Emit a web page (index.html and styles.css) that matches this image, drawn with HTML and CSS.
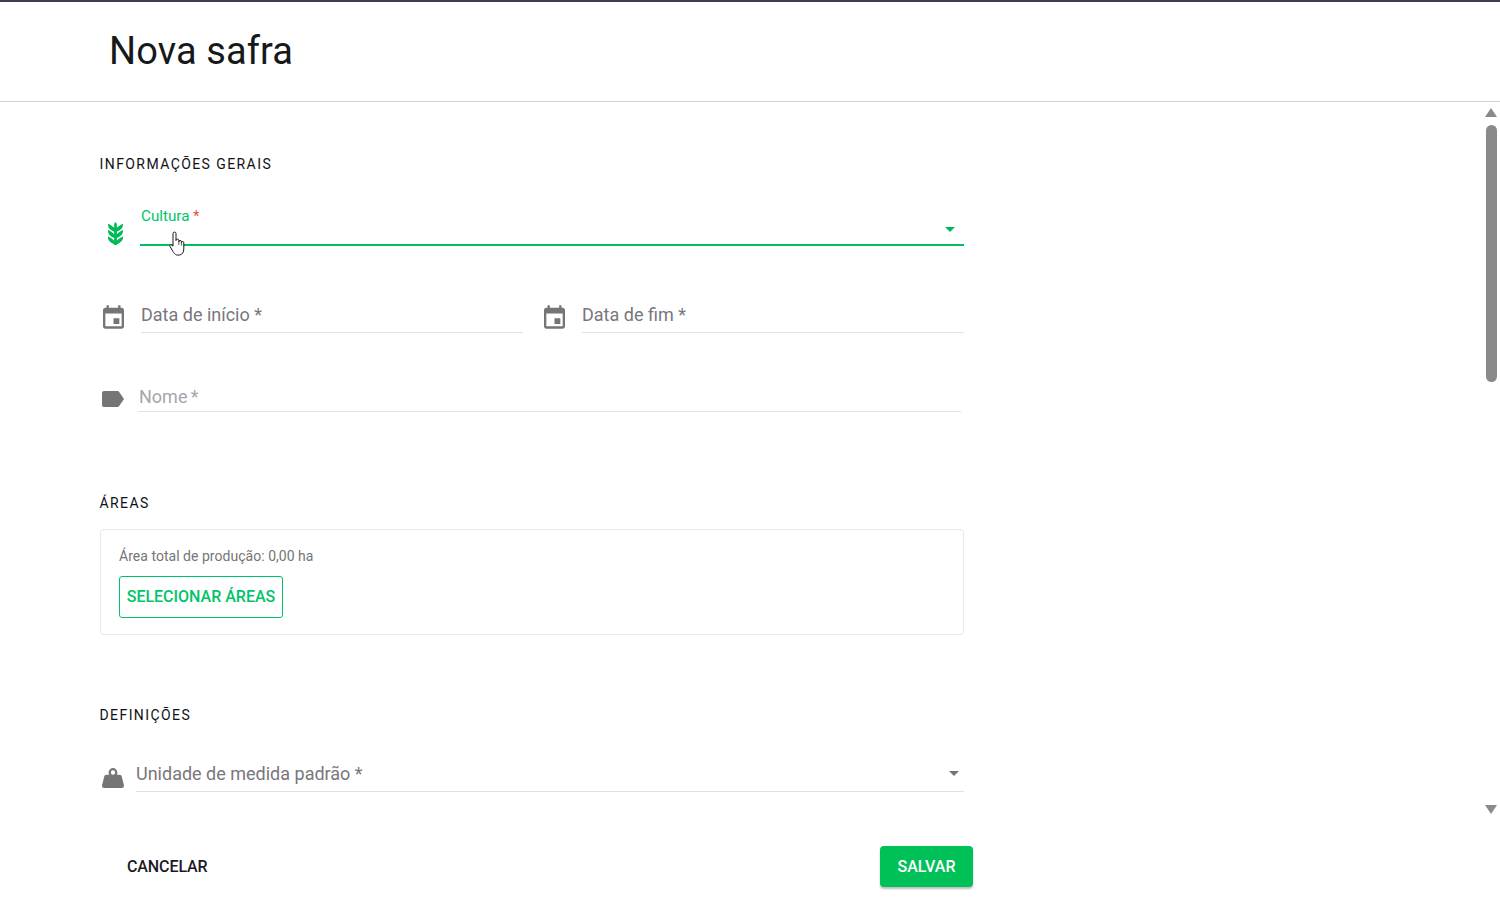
FILE: index.html
```html
<!DOCTYPE html>
<html lang="pt-BR">
<head>
<meta charset="utf-8">
<title>Nova safra</title>
<link rel="stylesheet" href="styles.css">
</head>
<body>
<div class="page">
  <header class="header"><h1 class="title">Nova safra</h1></header>
  <main class="main">
    <div class="content">
      <form class="form">
        <h2 class="section-title first">INFORMAÇÕES GERAIS</h2>
        <div class="row row-cultura">
          <svg class="icon icon-barley" viewBox="6.5 2 11 20" preserveAspectRatio="none"><path d="M7.33 18.33C6.5 17.17 6.5 15.83 6.5 14.5c1.67 1 3.33 2 4.17 3.17l.33.56v-2.28c-1.5-.9-2.86-1.95-3.67-3.12C6.5 11.67 6.5 10.33 6.5 9c1.67 1 3.33 2 4.17 3.17l.33.56V10.5C9.5 9.65 8.14 8.5 7.33 7.33 6.5 6.17 6.5 4.83 6.5 3.5c1.67 1 3.33 2 4.17 3.17.12.17.23.33.33.52V4.5S11 3 12 2c1 1 1 2.5 1 2.5v2.69c.1-.19.21-.35.33-.52C14.17 5.5 15.83 4.5 17.5 3.5c0 1.33 0 2.67-.83 3.83-.81 1.17-2.17 2.32-3.67 3.17v2.23l.33-.56C14.17 11 15.83 10 17.5 9c0 1.33 0 2.67-.83 3.83-.81 1.17-2.17 2.22-3.67 3.12v2.28l.33-.56c.84-1.17 2.5-2.17 4.17-3.17 0 1.33 0 2.67-.83 3.83-.81 1.17-2.17 2.32-3.67 3.17v.5h-2v-.5c-1.5-.85-2.86-2-3.67-3.17z"/></svg>
          <div class="field field-focus">
            <span class="float-label">Cultura <span class="req">*</span></span>
            <span class="caret caret-green"></span>
          </div>
        </div>
        <div class="row-pair">
          <div class="row row-date">
            <svg class="icon icon-event" viewBox="3 1 18 20"><path d="M17 12h-5v5h5v-5zM16 1v2H8V1H6v2H5c-1.11 0-1.99.9-1.99 2L3 19c0 1.1.89 2 2 2h14c1.1 0 2-.9 2-2V5c0-1.1-.9-2-2-2h-1V1h-2zm3 18H5V8h14v11z"/></svg>
            <div class="field field-plain"><span class="label">Data de início *</span></div>
          </div>
          <div class="row row-date">
            <svg class="icon icon-event" viewBox="3 1 18 20"><path d="M17 12h-5v5h5v-5zM16 1v2H8V1H6v2H5c-1.11 0-1.99.9-1.99 2L3 19c0 1.1.89 2 2 2h14c1.1 0 2-.9 2-2V5c0-1.1-.9-2-2-2h-1V1h-2zm3 18H5V8h14v11z"/></svg>
            <div class="field field-plain"><span class="label">Data de fim *</span></div>
          </div>
        </div>
        <div class="row row-nome">
          <svg class="icon icon-tag" viewBox="0 0 22 16"><path d="M17.2.9C16.8.4 16.2 0 15.5 0L2 0C.9 0 0 .9 0 2v12c0 1.100.9 2 2 2l13.500 0c.7 0 1.300-.4 1.700-.9L22 8 17.200.9z"/></svg>
          <div class="field field-plain field-nome"><span class="label label-light">Nome *</span></div>
        </div>
        <h2 class="section-title areas-title">ÁREAS</h2>
        <section class="card">
          <p class="card-text">Área total de produção: 0,00 ha</p>
          <button type="button" class="btn-outline">SELECIONAR ÁREAS</button>
        </section>
        <h2 class="section-title defs-title">DEFINIÇÕES</h2>
        <div class="row row-unidade">
          <svg class="icon icon-weight" viewBox="2 3 20 18"><path d="M12 3a4 4 0 0 1 4 4c0 .73-.19 1.41-.54 2H18c.95 0 1.75.67 1.95 1.56C21.96 18.57 22 18.78 22 19a2 2 0 0 1-2 2H4a2 2 0 0 1-2-2c0-.22.04-.43 2.05-8.44C4.25 9.67 5.05 9 6 9h2.54A3.89 3.89 0 0 1 8 7a4 4 0 0 1 4-4m0 2a2 2 0 0 0-2 2 2 2 0 0 0 2 2 2 2 0 0 0 2-2 2 2 0 0 0-2-2z"/></svg>
          <div class="field field-plain field-select">
            <span class="label">Unidade de medida padrão *</span>
            <span class="caret caret-grey"></span>
          </div>
        </div>
      </form>
    </div>
    <div class="scrollbar" aria-hidden="true">
      <span class="sb-up"></span>
      <span class="sb-thumb"></span>
      <span class="sb-down"></span>
    </div>
  </main>
  <footer class="footer">
    <button type="button" class="btn-text">CANCELAR</button>
    <button type="button" class="btn-primary">SALVAR</button>
  </footer>
</div>
<svg class="cursor" viewBox="0 0 17 25" aria-hidden="true"><path d="M4 15V2.600a1.500 1.500 0 0 1 3 0V9.500a1.400 1.400 0 0 1 2.800 0v1.200a1.300 1.300 0 0 1 2.600 0v1a1.200 1.200 0 0 1 2.400 0V18c0 3-1.500 5.500-4 6H7.500c-1.500-.5-2.500-2-3.500-3.500L1 15.500c-.8-1.300.8-2.500 1.800-1.300z"/><path class="cursor-line" d="M9.800 10v4M12.400 11v3.500"/></svg>
</body>
</html>
```
FILE: styles.css
```css
* { box-sizing: border-box; }
html, body { margin: 0; height: 100%; overflow: hidden; }
body { background: #fff; font-family: Roboto, "Liberation Sans", sans-serif; color: #1b1b1f; }
.page { height: 908px; display: flex; flex-direction: column; border-top: 2px solid #3f3f4b; position: relative; }
.header { height: 100px; flex: none; border-bottom: 1px solid #d2d2d2; padding: 0 0 1px 109px; display: flex; align-items: center; }
.title { margin: 0; font-size: 38px; font-weight: 400; line-height: 44px; letter-spacing: .1px; color: #16181a; }
.main { flex: 1; min-height: 0; display: flex; }
.content { flex: 1; min-width: 0; overflow: hidden; padding: 52px 0 0 100px; }
.form { width: 864px; }
.section-title { margin: 0; font-size: 14px; line-height: 20px; font-weight: 400; letter-spacing: 1.42px; color: #111114; position: relative; left: -.5px; }
.areas-title { margin-top: 81px; }
.defs-title { margin-top: 70px; }
.row { display: flex; height: 46px; }
.row-cultura { margin-top: 26px; }
.row-pair { display: flex; margin-top: 41px; }
.row-date { width: 441px; }
.row-date + .row-date { width: 423px; }
.row-nome { margin-top: 33px; }
.row-unidade { margin-top: 21px; }
.icon { flex: none; fill: #757575; }
.icon-barley { width: 15px; height: 23px; margin: 22px 17px 0 8px; fill: #00b957; }
.icon-event { width: 21px; height: 24px; margin: 18px 17px 0 3px; }
.icon-tag { width: 22px; height: 16px; margin: 25px 14px 0 2px; }
.icon-weight { width: 22px; height: 20px; margin: 22px 12px 0 2px; }
.field { flex: none; display: flex; }
.field-focus { width: 824px; height: 46px; flex-direction: column; border-bottom: 2px solid #00c060; padding: 8px 9px 0 1px; }
.float-label { font-size: 15.2px; line-height: 16px; color: #00c468; }
.req { color: #f44336; font-size: 14px; }
.caret { width: 0; height: 0; border-left: 5px solid transparent; border-right: 5px solid transparent; }
.caret-green { align-self: flex-end; margin-top: 3px; border-top: 5px solid #00b957; }
.caret-grey { margin-bottom: 8px; border-top: 5px solid #757575; }
.field-plain { height: 46px; border-bottom: 1px solid #e3e1e6; align-items: flex-end; padding-bottom: 7px; }
.row-date .field-plain { width: 382px; }
.field-nome { width: 823px; padding: 0 0 4px 1px; }
.field-select { width: 828px; justify-content: space-between; padding-right: 5px; }
.label { font-size: 18px; line-height: 21px; color: #79767d; }
.label-light { color: #a8a4ad; word-spacing: -1.2px; }
.card { margin-top: 16px; height: 106px; border: 1px solid #ebe8ee; border-radius: 4px; padding: 17px 18px 0; }
.card-text { margin: 0; font-size: 14px; line-height: 18px; letter-spacing: .03px; color: #757575; }
.btn-outline { display: block; margin-top: 11px; width: 164px; height: 42px; padding: 0 0 2px; background: #fff; border: 1px solid #00c468; border-radius: 3px; font: 500 16px Roboto, sans-serif; color: #00c468; cursor: pointer; }
.scrollbar { flex: none; width: 16px; margin-right: 1px; display: flex; flex-direction: column; align-items: center; padding: 6px 0 12px; }
.sb-up, .sb-down { width: 0; height: 0; border-left: 6px solid transparent; border-right: 6px solid transparent; }
.sb-up { border-bottom: 9px solid #8a8a8a; }
.sb-thumb { width: 11px; height: 257px; margin-top: 8px; border-radius: 6px; background: #8a8a8a; }
.sb-down { margin-top: auto; border-top: 9px solid #8a8a8a; }
.footer { flex: none; height: 82px; width: 973px; display: flex; justify-content: space-between; align-items: flex-start; padding: 20px 0 0 127px; }
.btn-text { padding: 0; height: 41px; background: none; border: 0; font: 500 16px Roboto, sans-serif; letter-spacing: -.1px; color: #1b1b1f; cursor: pointer; }
.btn-primary { width: 93px; height: 41px; padding: 0; border: 0; border-radius: 4px; background: #00c058; box-shadow: 0 2px 2px rgba(0,0,0,.25); font: 500 16px Roboto, sans-serif; color: #fff; cursor: pointer; }
.cursor { position: absolute; left: 169px; top: 231px; width: 17px; height: 25px; fill: #fff; stroke: #1a1a1a; stroke-width: 1; }
.cursor-line { fill: none; stroke-width: .7; }
```
